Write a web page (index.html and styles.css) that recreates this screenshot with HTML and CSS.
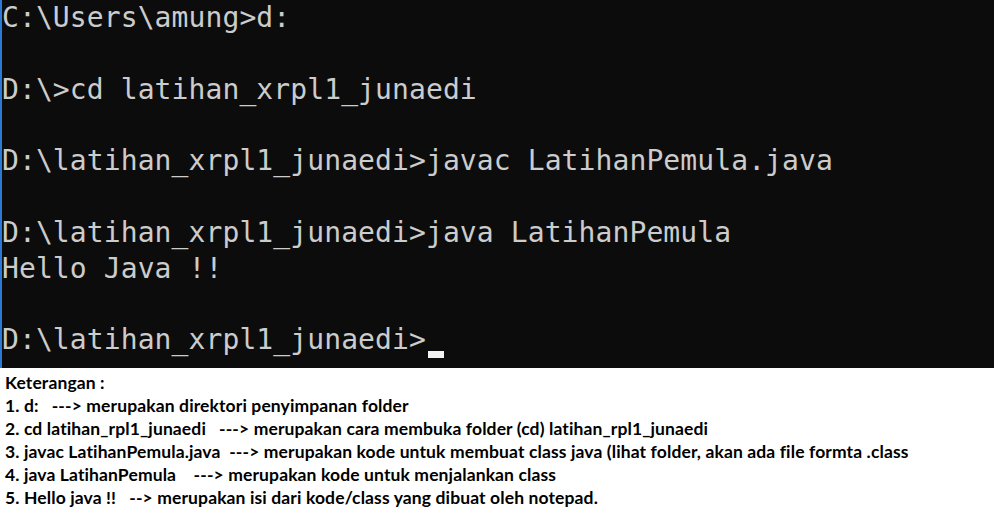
FILE: index.html
```html
<!DOCTYPE html>
<html>
<head>
<meta charset="utf-8">
<link rel="stylesheet" href="styles.css">
</head>
<body>
<div class="console"><div class="line">C:\Users\amung&gt;d:</div><div class="line"> </div><div class="line">D:\&gt;cd latihan_xrpl1_junaedi</div><div class="line"> </div><div class="line">D:\latihan_xrpl1_junaedi&gt;javac LatihanPemula.java</div><div class="line"> </div><div class="line">D:\latihan_xrpl1_junaedi&gt;java LatihanPemula</div><div class="line">Hello Java !!</div><div class="line"> </div><div class="line">D:\latihan_xrpl1_junaedi&gt;<span class="cursor"></span></div></div>
<div class="notes">
<div class="note">Keterangan :</div>
<div class="note">1. d:   ---&gt; merupakan direktori penyimpanan folder</div>
<div class="note">2. cd latihan_rpl1_junaedi   ---&gt; merupakan cara membuka folder (cd) latihan_rpl1_junaedi</div>
<div class="note">3. javac LatihanPemula.java  ---&gt; merupakan kode untuk membuat class java (lihat folder, akan ada file formta .class</div>
<div class="note">4. java LatihanPemula    ---&gt; merupakan kode untuk menjalankan class</div>
<div class="note">5. Hello java !!   --&gt; merupakan isi dari kode/class yang dibuat oleh notepad.</div>
</div>
</body>
</html>
```
FILE: styles.css
```css
html, body {
  margin: 0;
  padding: 0;
  background: #ffffff;
}
.console {
  box-sizing: border-box;
  height: 368px;
  width: 994px;
  background: #0c0c0c;
  border-left: 2px solid #2a7ad6;
  color: #cccccc;
  font-family: "DejaVu Sans Mono", monospace;
  font-size: 28px;
  letter-spacing: 0.1px;
  line-height: 35.8px;
  white-space: pre;
  overflow: hidden;
}
.line {
  height: 35.8px;
}
.cursor {
  display: inline-block;
  width: 16px;
  height: 7px;
  margin-left: 2px;
  background: #f2f2f2;
  vertical-align: -9px;
}
.notes {
  padding: 3px 0 0 5px;
  font-family: "Lato", sans-serif;
  font-weight: 700;
  font-size: 17.5px;
  letter-spacing: 0.12px;
  line-height: 23px;
  color: #000000;
}
.note {
  white-space: pre;
}
```
